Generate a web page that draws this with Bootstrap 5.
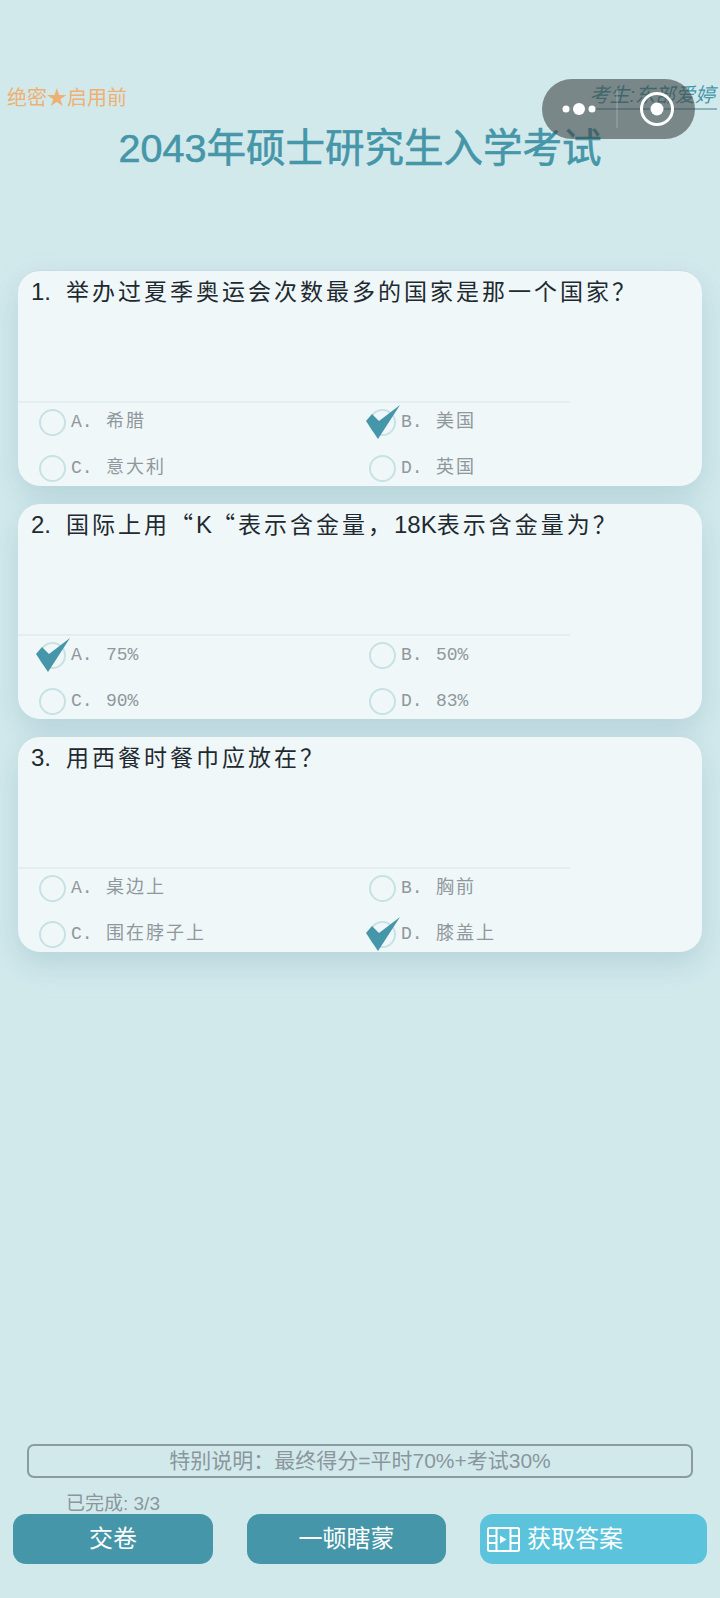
<!DOCTYPE html>
<html lang="zh-CN">
<head>
<meta charset="UTF-8" />
<meta name="viewport" content="width=device-width, initial-scale=1.0" />
<title>考试</title>
<link href="https://cdn.jsdelivr.net/npm/bootstrap@5.3.3/dist/css/bootstrap.min.css" rel="stylesheet" />
<style>
body { background: #d2e9ec; font-family: "Liberation Sans", "Noto Sans CJK SC", sans-serif; }
.exam-page { width: 720px; height: 1598px; position: relative; overflow: hidden; }
.top-row { padding: 84px 3px 0 7px; height: 112px; }
.secret { color: #edb174; font-size: 20px; line-height: 28px; }
.student { color: #4596a8; font-size: 20px; line-height: 25px; font-style: italic; border-bottom: 2px solid #8db4bd; height: 27px; padding-right: 2px; margin-top: -1px; }
.exam-title { color: #4596a8; font-size: 39.5px; line-height: 48px; height: 48px; margin: 12px 0 0; font-weight: 400; -webkit-text-stroke: .6px #4596a8; }
.capsule { position: absolute; left: 542px; top: 79px; width: 153px; height: 60px; border-radius: 30px; background: rgba(62, 70, 70, .6); }
.q-list { padding: 0 18px; margin-top: 98px; gap: 17px; }
.q-card { height: 216px; background: #eff7f9; border: 0; border-top: 1px solid #c6dce0; border-radius: 22px; box-shadow: 0 12px 30px rgba(69, 130, 150, .2); }
.q-text { height: 132px; flex: none; padding: 5px 0 0 13px; width: 552px; border-bottom: 2px solid #e3eef1; font-size: 23px; line-height: 28px; letter-spacing: 3px; color: #1f2a30; white-space: nowrap; font-family: "Noto Sans CJK SC", sans-serif; }
.q-num { display: inline-block; width: 35px; letter-spacing: 0; font-family: "Liberation Sans", sans-serif; font-size: 24px; }
.lat { letter-spacing: 0; font-family: "Liberation Sans", sans-serif; font-size: 24px; }
.opt-grid { display: grid; grid-template-columns: 330px 222px; grid-auto-rows: 38px; row-gap: 8px; padding: 0 0 0 21px; width: 552px; }
.opt { color: #8f989c; font-size: 18px; font-family: "Liberation Mono", "Noto Sans CJK SC", monospace; position: relative; }
.opt-zh { letter-spacing: 2px; }
.opt-key { width: 35px; flex: none; letter-spacing: 0; }
.radio-dot { width: 27px; height: 27px; flex: none; border-radius: 50%; border: 2px solid #c7e2e4; margin-right: 5px; }
.tick { position: absolute; left: -7px; top: -1px; width: 40px; height: 40px; }
.foot { position: absolute; left: 0; right: 0; bottom: 34px; }
.notice { margin: 0 27px; height: 34px; border: 2px solid #8a9ba3; border-radius: 7px; color: #8a969c; font-size: 21px; line-height: 30px; text-align: center; }
.done-txt { color: #8a969c; font-size: 19px; line-height: 24px; margin: 14px 0 -2px 66px; }
.foot-btns { padding: 0 13px; }
.foot-btn { height: 50px; border: 0; border-radius: 13px; color: #fff; font-size: 24px; line-height: 50px; padding: 0; background: #4596a8; }
.foot-btn:hover { background: #4596a8; color: #fff; }
.w-a { width: 200px; }
.w-b { width: 199px; }
.w-c { width: 227px; background: #5bc4dc; padding-left: 7px; gap: 7px; }
.w-c:hover { background: #5bc4dc; }
</style>
</head>
<body>
<div class="exam-page">
	<div class="top-row d-flex justify-content-between align-items-start">
		<div class="secret">绝密★启用前</div>
		<div class="student">考生:东部爱婷</div>
	</div>
	<h1 class="exam-title text-center">2043年硕士研究生入学考试</h1>

	<div class="q-list d-flex flex-column" id="list"></div>

	<div class="foot">
		<div class="notice">特别说明：最终得分=平时70%+考试30%</div>
		<div class="done-txt">已完成: 3/3</div>
		<div class="foot-btns d-flex justify-content-between">
			<button class="btn foot-btn w-a">交卷</button>
			<button class="btn foot-btn w-b">一顿瞎蒙</button>
			<button class="btn foot-btn w-c d-flex align-items-center">
				<svg width="33" height="25" viewBox="0 0 33 25" fill="none" stroke="#fff" stroke-width="2"><rect x="1" y="1" width="31" height="23" rx="1.5"/><path d="M9.5 1v23M23.5 1v23M1 9h8.500M1 16h8.500M23.500 9h8.500M23.500 16h8.500"/><path d="M13 8.500v8l6.500-4z" fill="#fff" stroke="none"/></svg>
				<span>获取答案</span>
			</button>
		</div>
	</div>

	<div class="capsule">
		<svg width="153" height="60" viewBox="0 0 153 60">
			<circle cx="24" cy="30" r="3.500" fill="#fff"/><circle cx="37" cy="30" r="6" fill="#fff"/><circle cx="50" cy="30" r="3.500" fill="#fff"/>
			<path d="M75 9v40" stroke="rgba(255,255,255,.3)" stroke-width="1"/>
			<circle cx="115" cy="30" r="15.500" fill="none" stroke="#fff" stroke-width="3"/><circle cx="115" cy="30" r="6.500" fill="#fff"/>
		</svg>
	</div>
</div>

<script>
	const questions = [
		{ q: "举办过夏季奥运会次数最多的国家是那一个国家？", opts: ["希腊", "美国", "意大利", "英国"], ans: 1 },
		{ q: "国际上用“<span class='lat'>K</span>“表示含金量，<span class='lat'>18K</span>表示含金量为？", opts: ["75%", "50%", "90%", "83%"], ans: 0, latin: true },
		{ q: "用西餐时餐巾应放在？", opts: ["桌边上", "胸前", "围在脖子上", "膝盖上"], ans: 3 },
	];
	const keys = ["A.", "B.", "C.", "D."];
	const tick = `<svg class="tick" viewBox="0 0 40 40"><polygon points="4,19 16,37 38,3 17,19 10,12" fill="#4596a8"/></svg>`;

	document.getElementById("list").innerHTML = questions.map((item, n) => `
		<div class="card q-card">
			<div class="q-text"><span class="q-num">${n + 1}.</span>${item.q}</div>
			<div class="opt-grid">
				${item.opts.map((o, i) => `
				<div class="opt d-flex align-items-center">
					<span class="radio-dot"></span>
					<span class="opt-key">${keys[i]}</span>
					<span class="${item.latin ? "" : "opt-zh"}">${o}</span>
					${i === item.ans ? tick : ""}
				</div>`).join("")}
			</div>
		</div>`).join("");
</script>
<script src="https://cdn.jsdelivr.net/npm/bootstrap@5.3.3/dist/js/bootstrap.bundle.min.js"></script>
</body>
</html>
